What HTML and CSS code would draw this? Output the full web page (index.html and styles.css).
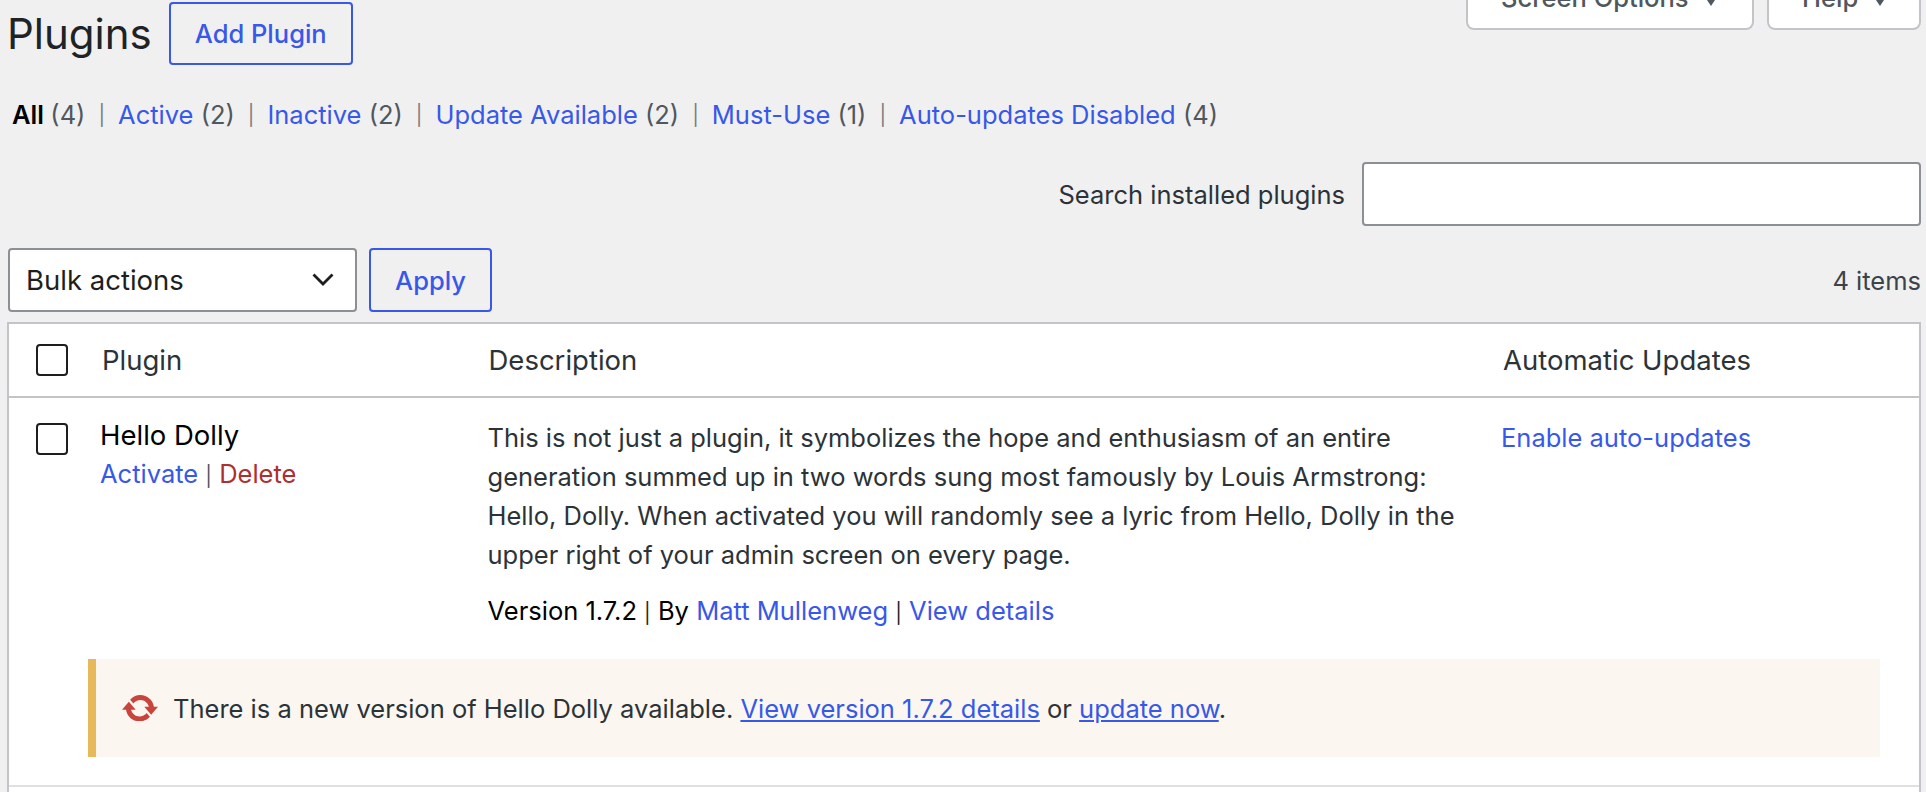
FILE: index.html
```html
<!DOCTYPE html>
<html lang="en">
<head>
<meta charset="utf-8">
<title>Plugins</title>
<link rel="stylesheet" href="styles.css">
</head>
<body>
<div class="wrap">
  <header class="head">
    <div class="title-group">
      <h1 class="title">Plugins</h1>
      <a class="btn add-btn" href="#">Add Plugin</a>
    </div>
    <div class="meta-tabs">
      <button class="meta-tab screen-tab">Screen Options<span class="caret"></span></button>
      <button class="meta-tab help-tab">Help<span class="caret"></span></button>
    </div>
  </header>
  <ul class="filters">
    <li class="filter current">All <span class="count">(4)</span></li>
    <li class="sep">|</li>
    <li class="filter"><a href="#">Active</a> <span class="count">(2)</span></li>
    <li class="sep">|</li>
    <li class="filter"><a href="#">Inactive</a> <span class="count">(2)</span></li>
    <li class="sep">|</li>
    <li class="filter"><a href="#">Update Available</a> <span class="count">(2)</span></li>
    <li class="sep">|</li>
    <li class="filter"><a href="#">Must-Use</a> <span class="count">(1)</span></li>
    <li class="sep">|</li>
    <li class="filter"><a href="#">Auto-updates Disabled</a> <span class="count">(4)</span></li>
  </ul>
  <div class="search-row">
    <label class="search-label" for="s">Search installed plugins</label>
    <input class="search-input" id="s" type="text">
  </div>
  <div class="tablenav">
    <div class="bulk">
      <div class="select">
        <span>Bulk actions</span>
        <svg class="chev" viewBox="0 0 22 14" width="22" height="14"><path d="M1.500 1.500l9.500 9.500 9.500-9.500" fill="none" stroke="#1e1e1e" stroke-width="2.800"/></svg>
      </div>
      <a class="btn apply-btn" href="#">Apply</a>
    </div>
    <span class="items">4 items</span>
  </div>
  <div class="table">
    <div class="row head-row">
      <div class="check-col"><span class="check"></span></div>
      <div class="name-col head-name">Plugin</div>
      <div class="desc-col head-desc">Description</div>
      <div class="auto-col head-auto">Automatic Updates</div>
    </div>
    <div class="row plugin-row">
      <div class="check-col"><span class="check"></span></div>
      <div class="name-col">
        <div class="plugin-name">Hello Dolly</div>
        <div class="actions"><a href="#">Activate</a> <span class="pipe">|</span> <a class="danger" href="#">Delete</a></div>
      </div>
      <div class="desc-col">
        <p class="desc">This is not just a plugin, it symbolizes the hope and enthusiasm of an entire generation summed up in two words sung most famously by Louis Armstrong: Hello, Dolly. When activated you will randomly see a lyric from Hello, Dolly in the upper right of your admin screen on every page.</p>
        <p class="version">Version 1.7.2 <span class="pipe">|</span> By <a href="#">Matt Mullenweg</a> <span class="pipe">|</span> <a href="#">View details</a></p>
      </div>
      <div class="auto-col auto-cell"><a href="#">Enable auto-updates</a></div>
    </div>
    <div class="update-row">
      <div class="notice">
        <svg class="update-icon" viewBox="0.8 3.280 18.400 13.440" width="36" height="26.500"><path fill="#c9443c" d="M10.200 3.280c3.530 0 6.430 2.610 6.920 6h2.080l-3.500 4-3.500-4h2.320c-.45-1.970-2.210-3.450-4.320-3.450-1.450 0-2.730.71-3.540 1.780L4.950 5.660C6.230 4.200 8.110 3.280 10.200 3.280zm-.4 13.440c-3.520 0-6.430-2.610-6.920-6H.8l3.500-4c1.170 1.330 2.330 2.670 3.500 4H5.480c.45 1.970 2.210 3.450 4.320 3.450 1.450 0 2.730-.71 3.540-1.780l1.710 1.950c-1.280 1.460-3.150 2.380-5.250 2.380z"/></svg>
        <span class="notice-text">There is a new version of Hello Dolly available. <a href="#">View version 1.7.2 details</a> or <a href="#">update now</a>.</span>
      </div>
    </div>
  </div>
</div>
</body>
</html>
```
FILE: styles.css
```css
* { box-sizing: border-box; }
html, body { margin: 0; height: 792px; overflow: hidden; }
body {
  background: #f0f0f0;
  font-family: Inter, "Liberation Sans", sans-serif;
  font-size: 25.500px;
  color: #2c3338;
}
a { color: #3858e9; text-decoration: none; }
.wrap { padding: 0 5px 0 7px; }

.head { display: flex; justify-content: space-between; align-items: flex-start; height: 65px; }
.title-group { display: flex; align-items: flex-start; gap: 17px; }
.title { margin: 5px 0 0 0; font-size: 42px; line-height: 58px; font-weight: 400; color: #1d2327; }
.btn {
  display: flex; align-items: center; justify-content: center;
  border: 2px solid #3858e9; border-radius: 4px;
  font-weight: 500; color: #3858e9; background: #f0f0f0;
}
.add-btn { width: 184px; height: 63px; margin-top: 2px; }
.meta-tabs { display: flex; gap: 13px; margin-top: -30px; }
.meta-tab {
  height: 60px; padding: 13px 0 0 33px; background: #fff;
  border: 2px solid #c3c4c7; border-top: 0; border-radius: 0 0 8px 8px;
  font: 500 25.500px/30px Inter, "Liberation Sans", sans-serif; color: #50575e;
  display: flex; align-items: flex-start; gap: 18px;
}
.caret { margin-top: 17px; width: 0; height: 0; border-left: 4.500px solid transparent; border-right: 4.500px solid transparent; border-top: 6px solid #50575e; }
.screen-tab { width: 288px; }
.help-tab { width: 154px; }

.filters {
  list-style: none; margin: 0; padding: 32px 0 0 5px;
  display: flex; gap: 13px; height: 97px; align-items: flex-start;
  line-height: 36px;
}
.filter { white-space: nowrap; }
.current { font-weight: 600; color: #000; }
.count { color: #50575e; font-weight: 400; }
.sep { color: #787c82; font-size: 20px; }

.search-row { display: flex; justify-content: flex-end; align-items: center; gap: 17px; height: 64px; }
.search-input { width: 559px; height: 64px; background: #fff; border: 2px solid #8c8f94; border-radius: 4px; }

.tablenav { display: flex; justify-content: space-between; align-items: center; height: 64px; margin-top: 22px; padding-left: 1px; }
.bulk { display: flex; gap: 12px; }
.select {
  width: 349px; height: 64px; display: flex; align-items: center; justify-content: space-between;
  padding: 0 21px 0 16px; background: #fff; border: 2px solid #8c8f94; border-radius: 4px; color: #1e1e1e;
  font-size: 27.500px;
}
.apply-btn { width: 123px; height: 64px; }
.items { color: #3c434a; }

.table { margin-top: 10px; background: #fff; border: 2px solid #c3c4c7; border-bottom: 0; height: 480px; }
.row { display: flex; }
.head-row { height: 74px; border-bottom: 2px solid #c3c4c7; align-items: center; font-size: 27.500px; }
.check-col { width: 91px; flex: none; padding-left: 27px; }
.check { display: block; width: 32px; height: 32px; background: #fff; border: 2px solid #1e1e1e; border-radius: 4px; }
.name-col { width: 387.500px; flex: none; }
.desc-col { width: 1013.500px; flex: none; }
.head-name { padding-left: 2px; }
.head-desc { padding-left: 1px; }
.head-auto { padding-left: 2px; }
.plugin-row { padding-top: 22px; height: 261px; }
.plugin-row .check-col { padding-top: 3px; }
.plugin-name { color: #000; font-size: 27.500px; line-height: 30px; }
.actions { line-height: 30px; margin-top: 9px; }
.pipe { color: #50575e; font-size: 20px; }
.version .pipe { color: #1e1e1e; }
.danger { color: #ad2f30; }
.desc { margin: -2px 0 0; line-height: 39px; width: 975px; }
.version { margin: 17px 0 0; line-height: 39px; color: #000; }
.auto-cell { padding-top: 2px; }
.update-row { padding: 0 39px 0 79px; height: 128px; border-bottom: 2px solid #e0e0e0; }
.notice {
  height: 98px; background: #fbf7f0; border-left: 8px solid #e8b95a;
  display: flex; align-items: center; padding-left: 26px; gap: 15px;
}
.notice-text a { text-decoration: underline; }
```
